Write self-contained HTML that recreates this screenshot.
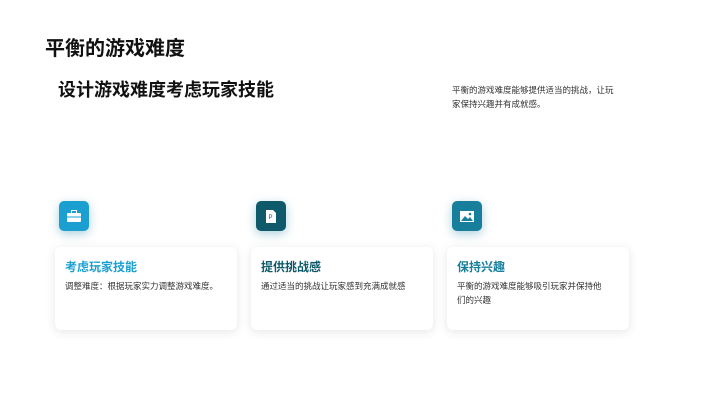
<!DOCTYPE html><html><head><meta charset="utf-8"><style>
body{margin:0;width:720px;height:404px;background:#fff;font-family:"Liberation Sans","Noto Sans CJK SC",sans-serif;position:relative;overflow:hidden;color:#111}
.a{position:absolute}
.h1{left:45px;top:32px;font-size:20px;font-weight:bold}
.h2{left:58px;top:76px;font-size:18px;font-weight:bold}
.r{left:452px;top:83px;width:166px;font-size:8.5px;line-height:14px;color:#333}
.ic{width:30px;height:30px;border-radius:5px;box-shadow:0 3px 10px rgba(20,120,160,.35);display:flex;align-items:center;justify-content:center}
.card{width:182px;height:83px;border-radius:6px;background:#fff;box-shadow:0 2px 10px rgba(0,0,0,.1);box-sizing:border-box;padding:11px 10px}
.t{font-size:12px;font-weight:bold;margin-bottom:4px}
.d{font-size:8.5px;line-height:14px;color:#333;width:160px}
</style></head><body>
<div class="a h1">平衡的游戏难度</div>
<div class="a h2">设计游戏难度考虑玩家技能</div>
<div class="a r">平衡的游戏难度能够提供适当的挑战，让玩家保持兴趣并有成就感。</div>

<div class="a ic" style="left:59px;top:201px;background:#1a9fd0"><svg width="14" height="12" viewBox="0 0 14 12"><rect x="4.5" y="0.5" width="5" height="3" fill="none" stroke="#fff"/><rect x="0" y="3" width="14" height="9" rx="1" fill="#fff"/><rect x="0" y="6.5" width="14" height="1" fill="#1a9fd0"/></svg></div>
<div class="a ic" style="left:256px;top:201px;background:#0e5a6a"><svg width="10" height="13" viewBox="0 0 10 13"><path d="M0 0H7L10 3V13H0Z" fill="#fff"/><text x="2.5" y="9" font-size="6" fill="#0e5a6a" font-family="Liberation Sans">P</text></svg></div>
<div class="a ic" style="left:452px;top:201px;background:#177f9c"><svg width="14" height="11" viewBox="0 0 14 11"><rect width="14" height="11" fill="#fff"/><path d="M1 10L5 5L8 8L10 6L13 10Z" fill="#177f9c"/><circle cx="10" cy="3" r="1.3" fill="#177f9c"/></svg></div>

<div class="a card" style="left:55px;top:247px"><div class="t" style="color:#1a9fd0">考虑玩家技能</div><div class="d">调整难度：根据玩家实力调整游戏难度。</div></div>
<div class="a card" style="left:251px;top:247px"><div class="t" style="color:#0e5a6a">提供挑战感</div><div class="d">通过适当的挑战让玩家感到充满成就感</div></div>
<div class="a card" style="left:447px;top:247px"><div class="t" style="color:#177f9c">保持兴趣</div><div class="d" style="width:152px">平衡的游戏难度能够吸引玩家并保持他们的兴趣</div></div>
</body></html>
